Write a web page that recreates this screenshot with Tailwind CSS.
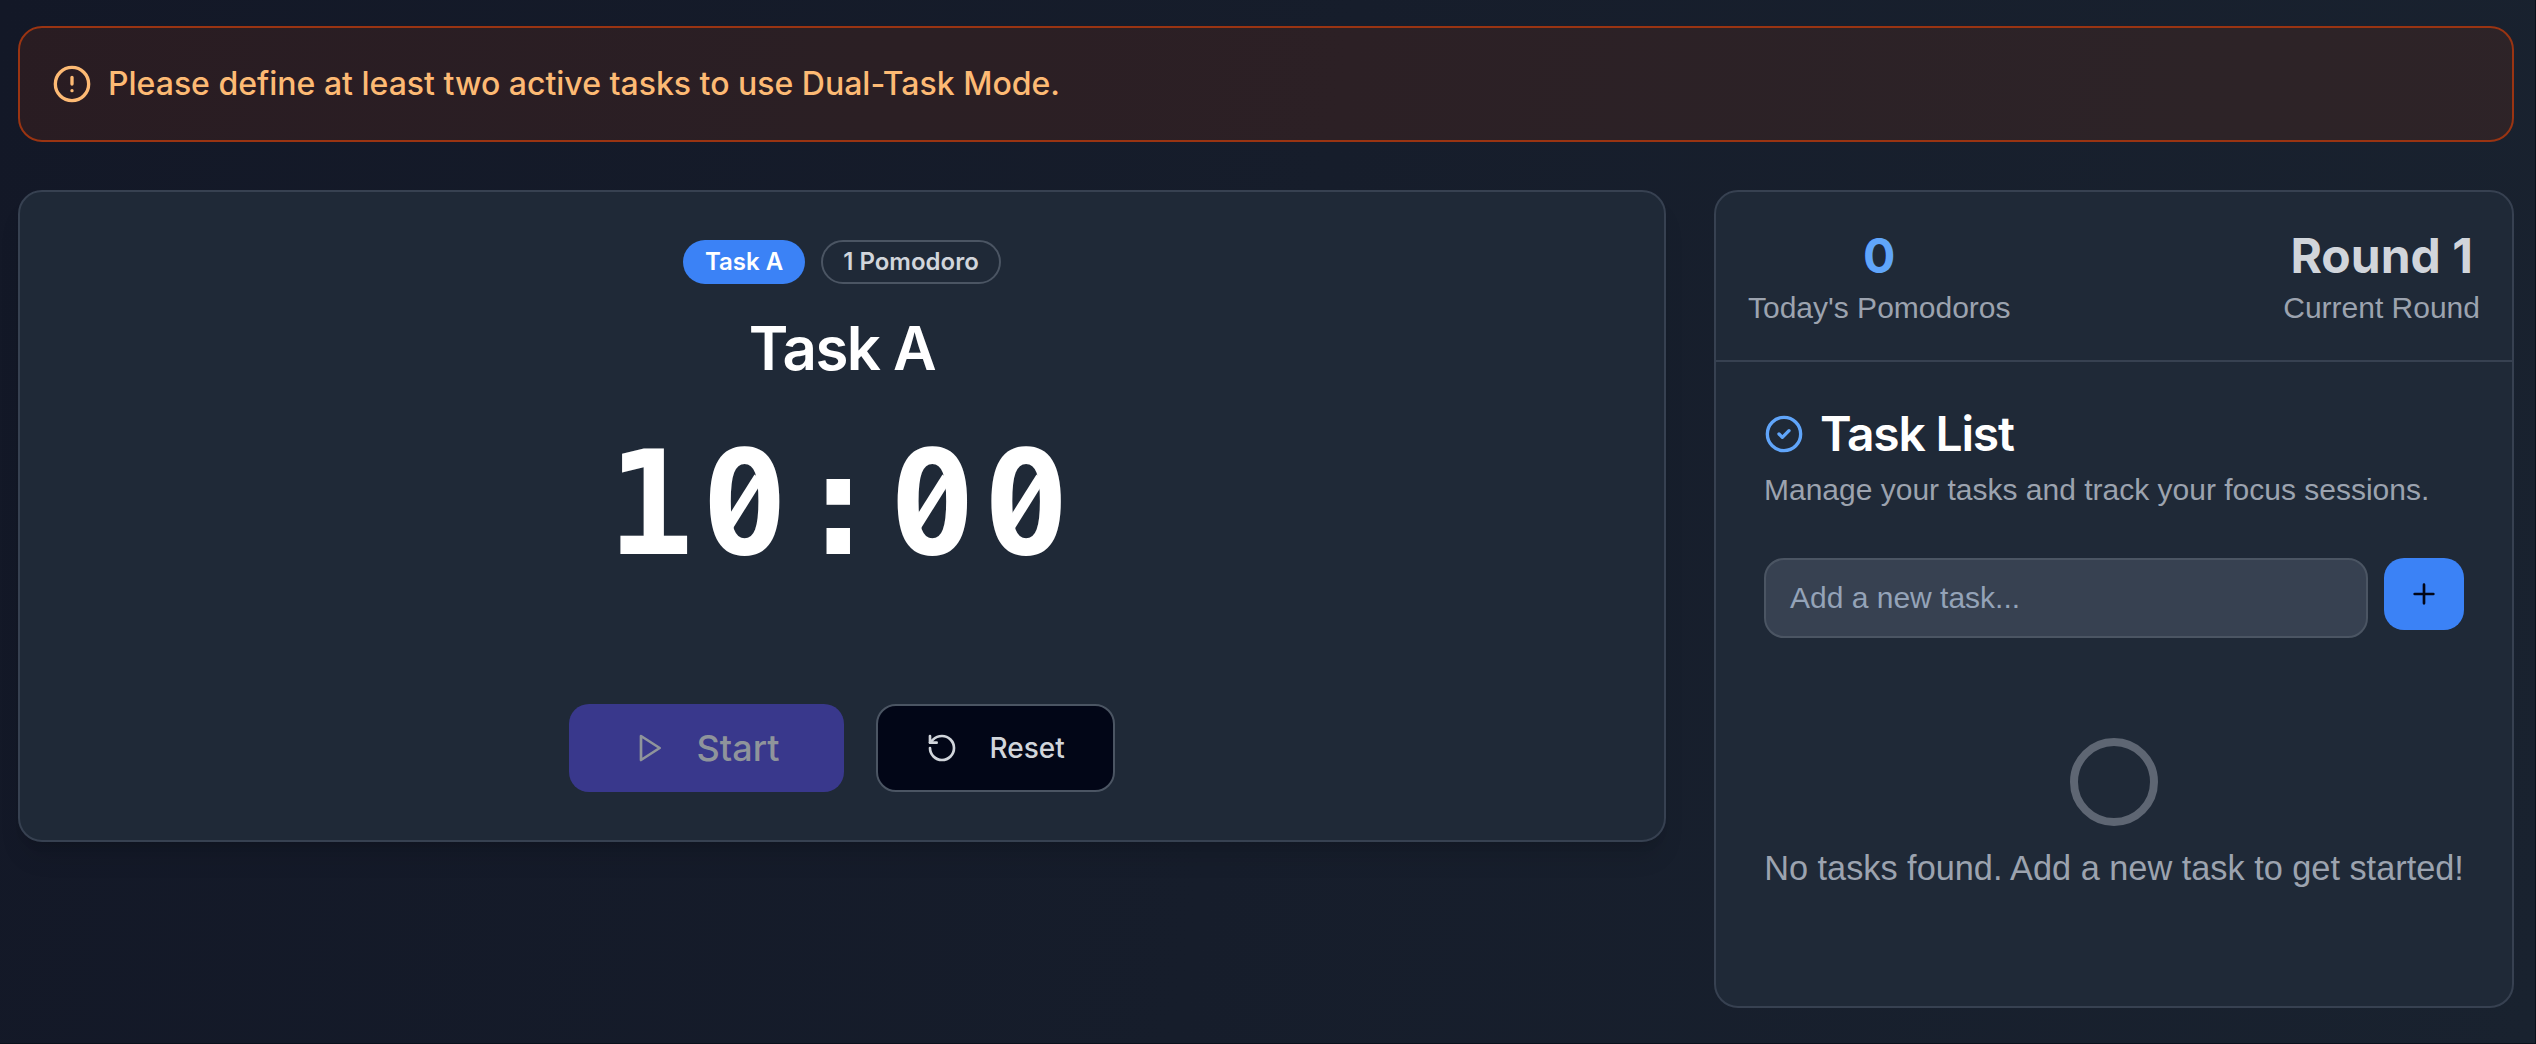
<!DOCTYPE html>
<html lang="en">
<head>
<meta charset="utf-8">
<title>Pomodoro</title>
<script src="https://cdn.jsdelivr.net/npm/@tailwindcss/browser@4"></script>
</head>
<body class="w-[2536px] h-[1044px] overflow-hidden bg-[#0b111c] font-['Inter',sans-serif]">
<!-- slash laid over the zero's counter -->
<svg class="hidden"><symbol id="slash" viewBox="-20 -40 40 80"><circle r="12" fill="#1f2937"/><path fill="#fff" d="M10.5-27.5 15-24 16-17 13.5-12.8-11.3 26.8-16 20-13.9 11.2z"/></symbol></svg>
<div class="w-[2535px] h-[1043px] bg-linear-[100deg,#131827,#19222f] pt-[26px] pl-[18px] pr-[21px]">
  <div class="h-[116px] rounded-[24px] border-2 border-[#9a3412] bg-[#7c2d12]/22 flex items-center pl-[32px] text-[#fdba74]">
    <svg class="size-[40px]" viewBox="0 0 24 24" fill="none" stroke="currentColor" stroke-width="2" stroke-linecap="round" stroke-linejoin="round"><circle cx="12" cy="12" r="10"/><path d="M12 8v4M12 16h.01"/></svg>
    <span class="ml-[16px] text-[32px] leading-[48px] font-medium">Please define at least two active tasks to use Dual-Task Mode.</span>
  </div>
  <div class="mt-[48px] flex gap-[48px] items-start">
    <div class="w-[1648px] h-[652px] rounded-[24px] border-2 border-[#374151] bg-[#1f2937] shadow-xl flex flex-col items-center pt-[48px]">
      <div class="flex gap-[16px]">
        <span class="h-[44px] w-[122px] rounded-full bg-[#3b82f6] text-white text-[24px] leading-[44px] font-semibold text-center">Task A</span>
        <span class="h-[44px] w-[180px] rounded-full border-2 border-[#4b5563] text-[#d1d5db] text-[24px] leading-[40px] font-semibold text-center">1 Pomodoro</span>
      </div>
      <h1 class="mt-[28px] text-[60px] leading-[72px] font-semibold tracking-tight text-white">Task A</h1>
      <div class="relative mt-[48px] text-[144px] leading-[144px] font-bold tracking-[7.2px] text-white font-['DejaVu_Sans_Mono',monospace]">10:00
        <svg class="absolute left-[117px] top-[29.5px] w-[40px] h-[80px]"><use href="#slash"/></svg>
        <svg class="absolute left-[304.8px] top-[29.5px] w-[40px] h-[80px]"><use href="#slash"/></svg>
        <svg class="absolute left-[398.7px] top-[29.5px] w-[40px] h-[80px]"><use href="#slash"/></svg>
      </div>
      <div class="mt-[128px] -ml-[1px] flex gap-[32px]">
        <button class="w-[275px] h-[88px] rounded-[20px] bg-[#39388c] text-[#8f949b] flex items-center pl-[64px]">
          <svg class="size-[32px]" viewBox="0 0 24 24" fill="none" stroke="currentColor" stroke-width="2" stroke-linecap="round" stroke-linejoin="round"><path d="M6 3l14 9-14 9z"/></svg>
          <span class="ml-[32px] text-[36px] font-medium">Start</span>
        </button>
        <button class="w-[239px] h-[88px] rounded-[20px] border-2 border-[#4b5563] bg-[#020617] text-[#d1d5db] flex items-center pl-[48px]">
          <svg class="size-[32px]" viewBox="0 0 24 24" fill="none" stroke="currentColor" stroke-width="2" stroke-linecap="round" stroke-linejoin="round"><path d="M3 12a9 9 0 1 0 9-9 9.75 9.75 0 0 0-6.74 2.74L3 8"/><path d="M3 3v5h5"/></svg>
          <span class="ml-[32px] text-[28px] font-medium">Reset</span>
        </button>
      </div>
    </div>
    <div class="w-[800px] h-[818px] rounded-[24px] border-2 border-[#374151] bg-[#1f2937]">
      <div class="h-[170px] border-b-2 border-[#374151] flex justify-between px-[32px] pt-[32px] text-center">
        <div>
          <div class="text-[48px] leading-[64px] font-bold text-[#60a5fa]">0</div>
          <div class="text-[30px] leading-[40px] text-[#9ca3af] font-['Liberation_Sans',sans-serif]">Today's Pomodoros</div>
        </div>
        <div>
          <div class="text-[48px] leading-[64px] font-bold text-[#d1d5db]">Round 1</div>
          <div class="text-[30px] leading-[40px] text-[#9ca3af] font-['Liberation_Sans',sans-serif]">Current Round</div>
        </div>
      </div>
      <div class="px-[48px] pt-[48px]">
        <div class="flex items-center gap-[16px] h-[48px]">
          <svg class="size-[40px] text-[#60a5fa]" viewBox="0 0 24 24" fill="none" stroke="currentColor" stroke-width="2" stroke-linecap="round" stroke-linejoin="round"><circle cx="12" cy="12" r="10"/><path d="m9 12 2 2 4-4"/></svg>
          <h2 class="text-[48px] leading-[48px] font-semibold tracking-tight text-white">Task List</h2>
        </div>
        <p class="mt-[12px] text-[30px] leading-[40px] text-[#9ca3af] font-['Liberation_Sans',sans-serif]">Manage your tasks and track your focus sessions.</p>
        <div class="mt-[48px] flex gap-[16px] items-start">
          <div class="w-[604px] h-[80px] rounded-[20px] border-2 border-[#4b5563] bg-[#374151] pl-[24px] text-[30px] leading-[76px] text-[#94a3b8] font-['Liberation_Sans',sans-serif]">Add a new task...</div>
          <button class="w-[80px] h-[72px] rounded-[20px] bg-[#3b82f6] text-[#020617] flex items-center justify-center">
            <svg class="size-[32px]" viewBox="0 0 24 24" fill="none" stroke="currentColor" stroke-width="2" stroke-linecap="round" stroke-linejoin="round"><path d="M5 12h14M12 5v14"/></svg>
          </button>
        </div>
        <div class="mt-[100px] flex flex-col items-center text-[#9ca3af]">
          <div class="size-[88px] rounded-full border-[8px] border-[#5e6673]"></div>
          <p class="mt-[18px] text-[34.3px] leading-[48px] whitespace-nowrap font-['Liberation_Sans',sans-serif]">No tasks found. Add a new task to get started!</p>
        </div>
      </div>
    </div>
  </div>
</div>
</body>
</html>
